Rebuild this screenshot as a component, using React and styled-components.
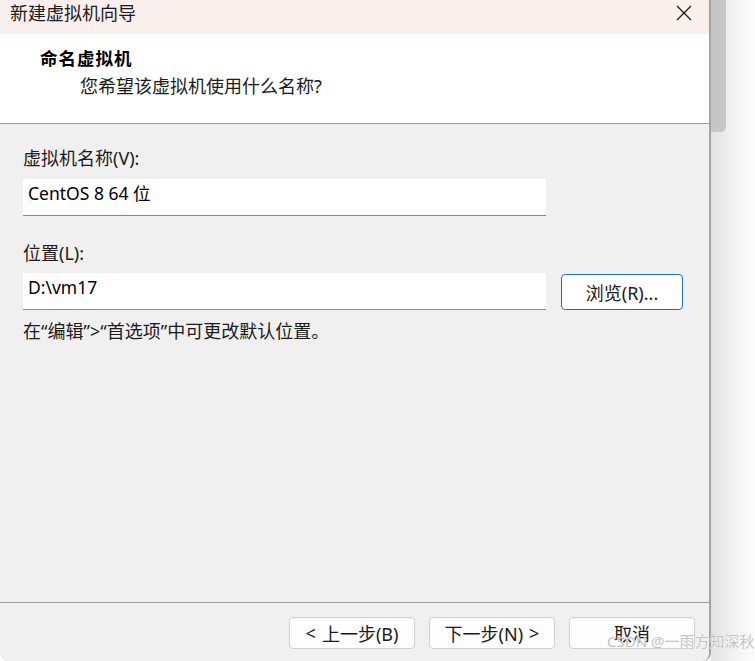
import React from "react";
import styled, { createGlobalStyle } from "styled-components";

const GlobalStyle = createGlobalStyle`
  html, body { margin: 0; padding: 0; background: #ffffff; overflow: hidden; }
  * { box-sizing: border-box; }
`;

const FONT = `"Noto Sans", "Noto Sans CJK SC", sans-serif`;

const Page = styled.div`
  position: relative;
  display: flex;
  width: 755px;
  height: 661px;
  font-family: ${FONT};
  color: #1b1b1b;
`;

const Dialog = styled.div`
  width: 711px;
  height: 661px;
  display: flex;
  flex-direction: column;
  background: #f0f0f0;
  border-right: 2px solid #a3a3a3;
  border-bottom-left-radius: 8px;
  border-bottom-right-radius: 8px;
  overflow: hidden;
`;

const TitleBar = styled.div`
  height: 34px;
  flex: none;
  display: flex;
  align-items: flex-start;
  justify-content: space-between;
  padding: 2px 17px 0 10px;
  background: #f9efed;
`;

const Title = styled.span`
  font-size: 18px;
  line-height: 22px;
  color: #1a1a1a;
`;

const CloseBtn = styled.div`
  width: 16px;
  height: 16px;
  margin-top: 3px;
  display: flex;
`;

const Header = styled.div`
  height: 90px;
  flex: none;
  background: #ffffff;
  border-bottom: 1px solid #a0a0a0;
  padding: 12px 0 0 40px;
`;

const HeaderTitle = styled.div`
  font-size: 17.5px;
  font-weight: 700;
  line-height: 24px;
  letter-spacing: 1px;
  color: #000;
`;

const HeaderSub = styled.div`
  margin: 4px 0 0 40px;
  font-size: 18px;
  line-height: 24px;
  color: #1a1a1a;
`;

const Body = styled.div`
  flex: 1;
  padding: 22px 0 0 23px;
  display: flex;
  flex-direction: column;
`;

const Label = styled.div`
  font-size: 18px;
  line-height: 24px;
  margin-top: ${(p) => p.$top || 0}px;
`;

const Row = styled.div`
  display: flex;
  align-items: flex-start;
  gap: 15px;
  margin-top: ${(p) => p.$top || 0}px;
`;

const Field = styled.div`
  width: 523px;
  height: 37px;
  background: #ffffff;
  border-bottom: 1px solid #8a8a8a;
  padding: 2px 0 0 5px;
  font-size: 17.5px;
  line-height: 24px;
  color: #000;
`;

const BrowseButton = styled.div`
  width: 122px;
  height: 36px;
  margin-top: 1px;
  display: flex;
  align-items: center;
  justify-content: center;
  background: #ffffff;
  border: 1px solid #1a6fc4;
  border-radius: 4px;
  font-size: 18px;
  color: #1a1a1a;
`;

const Hint = styled.div`
  margin-top: 9px;
  font-size: 18px;
  line-height: 24px;
`;

const Footer = styled.div`
  height: 59px;
  flex: none;
  border-top: 1px solid #a0a0a0;
  padding: 14px 14px 0 0;
  display: flex;
  justify-content: flex-end;
  gap: 14px;
`;

const FooterButton = styled.div`
  width: 126px;
  height: 32px;
  display: flex;
  align-items: center;
  justify-content: center;
  background: #fdfdfd;
  border: 1px solid #d0d0d0;
  border-radius: 4px;
  font-size: 18px;
  color: #1a1a1a;
  gap: 6px;
`;

const Side = styled.div`
  flex: 1;
  background: linear-gradient(to right, #e2e2e2, #f4f4f4 60%, #fdfdfd);
`;

const ScrollStrip = styled.div`
  width: 15px;
  height: 132px;
  background: #c6c6c6;
  border-bottom-right-radius: 6px;
`;

const Watermark = styled.div`
  position: absolute;
  left: 607px;
  top: 631px;
  font-size: 15px;
  line-height: 20px;
  color: #c4c4c4;
  text-shadow: 0 0 1px #fff, 0 0 1px #fff;
  white-space: nowrap;
`;

export default function App() {
  return (
    <>
      <GlobalStyle />
      <Page>
        <Dialog>
          <TitleBar>
            <Title>新建虚拟机向导</Title>
            <CloseBtn>
              <svg width="16" height="16" viewBox="0 0 16 16">
                <path d="M1 1 L15 15 M15 1 L1 15" stroke="#1a1a1a" strokeWidth="1.3" fill="none" />
              </svg>
            </CloseBtn>
          </TitleBar>
          <Header>
            <HeaderTitle>命名虚拟机</HeaderTitle>
            <HeaderSub>您希望该虚拟机使用什么名称?</HeaderSub>
          </Header>
          <Body>
            <Label>虚拟机名称(V):</Label>
            <Row $top={9}>
              <Field>CentOS 8 64 位</Field>
            </Row>
            <Label $top={25}>位置(L):</Label>
            <Row $top={8}>
              <Field>D:\vm17</Field>
              <BrowseButton>浏览(R)...</BrowseButton>
            </Row>
            <Hint>在“编辑”&gt;“首选项”中可更改默认位置。</Hint>
          </Body>
          <Footer>
            <FooterButton>
              <span>&lt;</span>
              <span>上一步(B)</span>
            </FooterButton>
            <FooterButton>
              <span>下一步(N)</span>
              <span>&gt;</span>
            </FooterButton>
            <FooterButton>取消</FooterButton>
          </Footer>
        </Dialog>
        <Side>
          <ScrollStrip />
        </Side>
        <Watermark>CSDN @一雨方知深秋</Watermark>
      </Page>
    </>
  );
}
